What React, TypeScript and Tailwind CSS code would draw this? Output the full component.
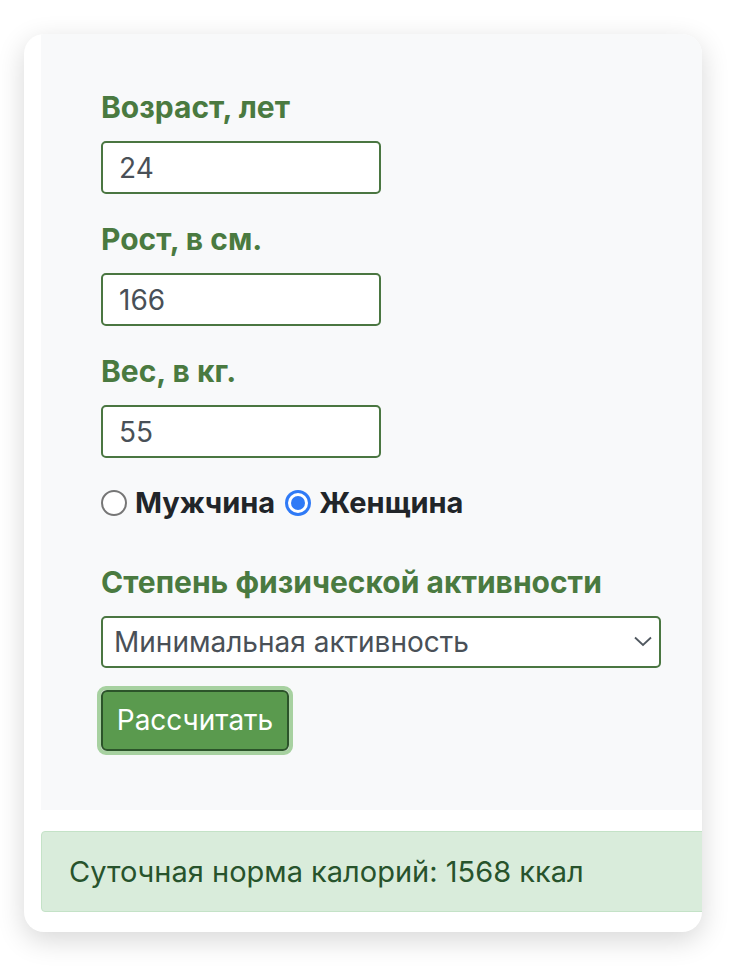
import { useState } from 'react';

const label = 'block text-[30px] leading-[36px] font-bold text-[#4a7a40] mb-[16px]';
const input =
  'block w-[280px] h-[53px] rounded-[5px] border-2 border-[#4a7641] bg-white pl-[16px] text-[28px] text-[#495057] outline-none';

export default function App() {
  const [sex, setSex] = useState('f');

  return (
    <div className="min-h-[966px] bg-white pt-[34px] pl-[24px] font-['Inter',sans-serif]">
      <div className="w-[678px] h-[898px] rounded-[20px] bg-white shadow-[0_8px_28px_rgba(0,0,0,0.16)] overflow-hidden pl-[17px]">
        <div className="w-[720px]">
          <div className="bg-[#f8f9fa] pl-[60px] pt-[55px] pb-[55px]">
            <label className={label}>Возраст, лет</label>
            <input className={input} defaultValue="24" />

            <label className={`${label} mt-[27px]`}>Рост, в см.</label>
            <input className={input} defaultValue="166" />

            <label className={`${label} mt-[27px]`}>Вес, в кг.</label>
            <input className={input} defaultValue="55" />

            <div className="flex items-center mt-[27px] h-[36px] text-[29px] font-bold text-[#212529]">
              <span
                onClick={() => setSex('m')}
                className={`w-[26px] h-[26px] rounded-full border-2 ${
                  sex === 'm' ? 'border-[#2f7af6] bg-white' : 'border-[#767676] bg-white'
                } flex items-center justify-center`}
              />
              <span className="ml-[8px]">Мужчина</span>
              <span
                onClick={() => setSex('f')}
                className="ml-[10px] w-[26px] h-[26px] rounded-full bg-[#2f7af6] flex items-center justify-center"
              >
                <span className="w-[20px] h-[20px] rounded-full bg-white flex items-center justify-center">
                  <span className="w-[14px] h-[14px] rounded-full bg-[#2f7af6]" />
                </span>
              </span>
              <span className="ml-[8px]">Женщина</span>
            </div>

            <label className={`${label} mt-[43px]`}>Степень физической активности</label>
            <div className="relative w-[560px]">
              <select className="appearance-none block w-[560px] h-[52px] rounded-[5px] border-2 border-[#4a7641] bg-white pl-[11px] text-[28px] text-[#495057] outline-none">
                <option>Минимальная активность</option>
                <option>Слабая активность</option>
                <option>Средняя активность</option>
                <option>Высокая активность</option>
              </select>
              <svg
                className="absolute right-[9px] top-[20px] w-[18px] h-[11px]"
                viewBox="0 0 18 11"
                fill="none"
              >
                <path d="M1 1.5l8 7.5 8-7.5" stroke="#505860" strokeWidth="1.8" />
              </svg>
            </div>

            <button className="block mt-[18px] ml-[-4px] rounded-[9px] border-[4px] border-[#a7d1a0]">
              <span className="block w-[188px] h-[61px] rounded-[6px] border-2 border-[#2c542a] bg-[#5a9a4e] text-[28px] text-white leading-[57px]">
                Рассчитать
              </span>
            </button>
          </div>

          <div className="mt-[21px] h-[81px] rounded-[4px] border border-[#c4e2c7] bg-[#d9ecdb] pl-[27px] flex items-center text-[29px] text-[#27532c]">
            Суточная норма калорий: 1568 ккал
          </div>
        </div>
      </div>
    </div>
  );
}
